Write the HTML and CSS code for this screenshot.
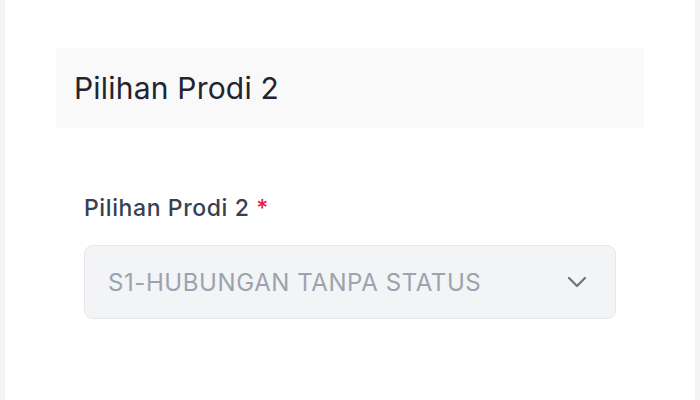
FILE: index.html
```html
<!DOCTYPE html>
<html lang="id">
<head>
<meta charset="utf-8">
<link rel="stylesheet" href="styles.css">
</head>
<body>
<div class="frame">
  <main class="page">
    <section class="card">
      <div class="card-head">
        <h2 class="card-title">Pilihan Prodi 2</h2>
      </div>
      <div class="card-body">
        <label class="field-label">Pilihan Prodi 2 <span class="req">*</span></label>
        <div class="select">
          <span class="select-value">S1-HUBUNGAN TANPA STATUS</span>
          <svg class="chev" width="20" height="12" viewBox="0 0 20 12" fill="none">
            <path d="M2 2l8 8 8-8" stroke="#6b7280" stroke-width="2.2" stroke-linecap="round" stroke-linejoin="round"/>
          </svg>
        </div>
      </div>
    </section>
  </main>
</div>
</body>
</html>
```
FILE: styles.css
```css
* { box-sizing: border-box; }
html, body { margin: 0; padding: 0; }
body {
  width: 700px;
  height: 400px;
  overflow: hidden;
  font-family: Inter, "Noto Sans", sans-serif;
  background: #f3f4f6;
}
.frame {
  height: 400px;
  padding: 0 5px 0 5px;
  display: flex;
}
.page {
  flex: 1;
  background: #ffffff;
  padding: 48px 51px 0 51px;
}
.card-head {
  width: 588px;
  height: 80px;
  background: #f9f9f9;
  display: flex;
  align-items: center;
  padding-left: 18px;
}
.card-title {
  margin: 0;
  font-size: 30px;
  font-weight: 400;
  color: #1f2430;
  letter-spacing: 0.2px;
}
.card-body {
  padding: 67px 28px 0 28px;
}
.field-label {
  display: block;
  font-size: 23px;
  font-weight: 500;
  color: #374151;
  letter-spacing: 0.6px;
  line-height: 26px;
}
.req { color: #e11d48; }
.select {
  margin-top: 24px;
  width: 532px;
  height: 74px;
  background: #f3f4f6;
  border: 1.5px solid #e5e7eb;
  border-radius: 9px;
  display: flex;
  align-items: center;
  justify-content: space-between;
  padding: 0 28px 0 23px;
}
.select-value {
  font-size: 24px;
  color: #9ca3af;
  letter-spacing: 0.58px;
}
.chev { display: block; }
```
